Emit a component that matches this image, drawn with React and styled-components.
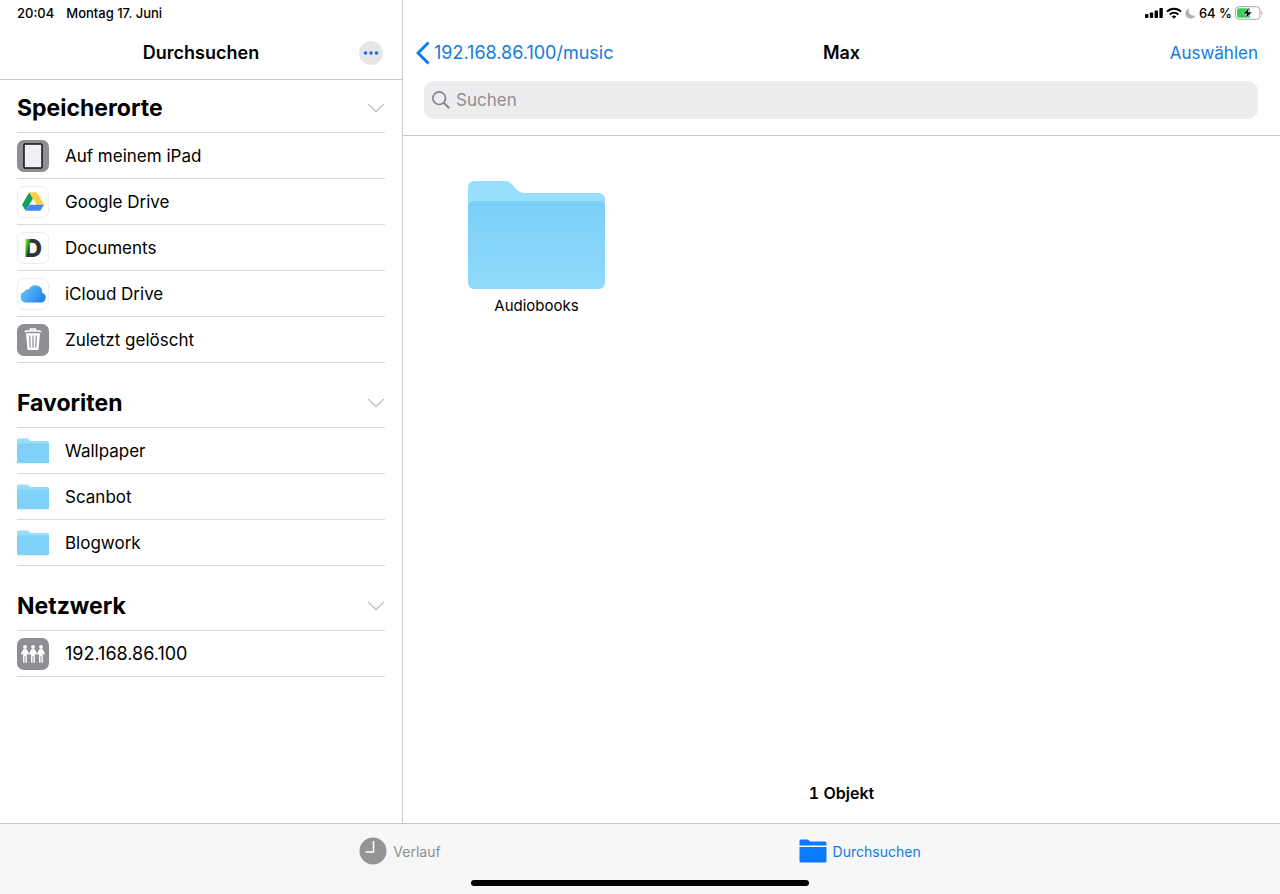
import React, { useState } from 'react';
import styled, { createGlobalStyle, ThemeProvider } from 'styled-components';

const theme = {
  colors: {
    text: '#000000',
    accent: '#0a7aff',
    link: '#147ade',
    muted: '#8e8e93',
    tile: '#8e8e93',
    separator: '#d9d9db',
    border: '#c8c8ca',
    field: '#ededef',
    tabBar: '#f7f7f7',
  },
  fontSizes: {
    status: '13px',
    tab: '14px',
    label: '15px',
    summary: '16px',
    row: '17px',
    body: '18px',
    heading: '23px',
  },
};

const GlobalStyle = createGlobalStyle`
  * {
    box-sizing: border-box;
  }

  body {
    margin: 0;
    background: #ffffff;
    color: #000000;
    font-family: Inter, 'Liberation Sans', sans-serif;
  }

  button, input {
    font: inherit;
    color: inherit;
  }

  button {
    padding: 0;
    border: none;
    background: none;
    cursor: pointer;
  }

  svg {
    display: block;
    flex: none;
  }
`;

const Screen = styled.div`
  display: flex;
  flex-direction: column;
  min-height: 100vh;
`;

const Panes = styled.div`
  display: flex;
  flex: 1;
`;

const Sidebar = styled.aside`
  flex: none;
  width: 403px;
  border-right: 1px solid ${({ theme }) => theme.colors.border};
`;

const Main = styled.main`
  display: flex;
  flex-direction: column;
  flex: 1;
  min-width: 0;
`;

const StatusBar = styled.div`
  display: flex;
  align-items: center;
  justify-content: ${({ $end }) => ($end ? 'flex-end' : 'flex-start')};
  gap: ${({ $end }) => ($end ? '3px' : '12px')};
  height: 26px;
  padding: 0 17px;
  font-size: ${({ theme }) => theme.fontSizes.status};
  font-weight: 500;
  white-space: nowrap;
`;

const NavBar = styled.header`
  display: grid;
  grid-template-columns: 1fr auto 1fr;
  align-items: center;
  height: 54px;
  padding: 0 ${({ $wide }) => ($wide ? '13px' : '19px')};
  border-bottom: ${({ $wide, theme }) => ($wide ? 'none' : `1px solid ${theme.colors.border}`)};
`;

const NavTitle = styled.h1`
  grid-column: 2;
  margin: 0;
  font-size: ${({ theme }) => theme.fontSizes.body};
  font-weight: 600;
  line-height: 24px;
`;

const MoreButton = styled.button`
  display: flex;
  align-items: center;
  justify-content: center;
  justify-self: end;
  width: 24px;
  height: 24px;
  border-radius: 50%;
  background: #e6e6e9;
`;

const BackLink = styled.a`
  display: flex;
  align-items: center;
  gap: 4px;
  color: ${({ theme }) => theme.colors.link};
  font-size: ${({ theme }) => theme.fontSizes.body};
  line-height: 24px;
  text-decoration: none;
`;

const SelectButton = styled.button`
  justify-self: end;
  padding-right: 9px;
  color: ${({ theme }) => theme.colors.link};
  font-size: ${({ theme }) => theme.fontSizes.row};
  line-height: 24px;
`;

const Section = styled.section`
  margin: 0 17px 12px;
`;

const SectionHeader = styled.button`
  display: flex;
  align-items: center;
  justify-content: space-between;
  width: 100%;
  height: 53px;
  padding-top: 4px;
  border-bottom: 1px solid ${({ theme }) => theme.colors.separator};
`;

const SectionTitle = styled.span`
  font-size: ${({ theme }) => theme.fontSizes.heading};
  font-weight: 700;
  line-height: 28px;
`;

const List = styled.ul`
  margin: 0;
  padding: 0;
  list-style: none;
`;

const Row = styled.a`
  display: flex;
  align-items: center;
  gap: 16px;
  height: 46px;
  border-bottom: 1px solid ${({ theme }) => theme.colors.separator};
  color: ${({ theme }) => theme.colors.text};
  font-size: ${({ $address, theme }) => ($address ? theme.fontSizes.body : theme.fontSizes.row)};
  line-height: 24px;
  text-decoration: none;
`;

const Tile = styled.span`
  display: flex;
  align-items: center;
  justify-content: center;
  flex: none;
  width: 32px;
  height: 32px;
  border: ${({ $filled }) => ($filled ? 'none' : '1px solid #ececec')};
  border-radius: 7px;
  background: ${({ $filled, theme }) => ($filled ? theme.colors.tile : '#ffffff')};
`;

const SearchArea = styled.div`
  padding: 1px 22px 16px 21px;
  border-bottom: 1px solid ${({ theme }) => theme.colors.border};
`;

const SearchField = styled.label`
  display: flex;
  align-items: center;
  gap: 6px;
  height: 38px;
  padding: 0 8px;
  border-radius: 10px;
  background: ${({ theme }) => theme.colors.field};
`;

const SearchInput = styled.input`
  flex: 1;
  min-width: 0;
  padding: 0;
  border: none;
  outline: none;
  background: none;
  font-size: ${({ theme }) => theme.fontSizes.row};
  line-height: 24px;

  &::placeholder {
    color: ${({ theme }) => theme.colors.muted};
    opacity: 1;
  }
`;

const Files = styled.div`
  display: flex;
  flex-wrap: wrap;
  align-items: flex-start;
  flex: 1;
  gap: 40px;
  padding: 45px 65px;
`;

const FileItem = styled.button`
  display: flex;
  flex-direction: column;
  align-items: center;
  gap: 6px;
  font-size: ${({ theme }) => theme.fontSizes.label};
  line-height: 22px;
`;

const Summary = styled.p`
  margin: 0;
  padding-bottom: 19px;
  font-size: ${({ theme }) => theme.fontSizes.summary};
  font-weight: 600;
  font-variant-numeric: tabular-nums;
  line-height: 22px;
  text-align: center;
`;

const BottomBar = styled.footer`
  display: flex;
  flex-direction: column;
  align-items: center;
  justify-content: space-between;
  height: 71px;
  padding-bottom: 8px;
  border-top: 1px solid ${({ theme }) => theme.colors.border};
  background: ${({ theme }) => theme.colors.tabBar};
`;

const Tabs = styled.nav`
  display: flex;
  justify-content: center;
  gap: 358px;
  padding-top: 13px;
`;

const Tab = styled.button`
  display: flex;
  align-items: center;
  gap: 6px;
  height: 28px;
  color: ${({ $active, theme }) => ($active ? theme.colors.link : theme.colors.muted)};
  font-size: ${({ theme }) => theme.fontSizes.tab};
`;

const HomeIndicator = styled.div`
  width: 338px;
  height: 6px;
  border-radius: 3px;
  background: #000000;
`;

const SignalIcon = () => (
  <svg width="18" height="12" viewBox="0 0 18 12" aria-hidden="true">
    <rect x="0" y="7" width="3.400" height="4" rx="0.800" />
    <rect x="4.800" y="5.500" width="3.400" height="5.500" rx="0.800" />
    <rect x="9.600" y="3.500" width="3.400" height="7.500" rx="0.800" />
    <rect x="14.400" y="1" width="3.400" height="10" rx="0.800" />
  </svg>
);

const WifiIcon = () => (
  <svg width="16" height="12" viewBox="0 0 16 12" fill="none" stroke="#000" strokeWidth="2" aria-hidden="true">
    <path d="M1 4.6C5 .7 11 .7 15 4.6" />
    <path d="M3.7 7.5c2.5-2.3 6.100-2.300 8.600 0" />
    <path d="M5.700 9.500c1.400-1.200 3.200-1.200 4.600 0L8 11.800z" fill="#000" stroke="none" />
  </svg>
);

const MoonIcon = () => (
  <svg width="11" height="11" viewBox="0 0 11 11" aria-hidden="true">
    <path d="M4 .5C2.600 4.900 5.900 8.700 10.500 7.400A5.200 5.200 0 1 1 4 .5z" fill="#b0b0b2" />
  </svg>
);

const BatteryIcon = () => (
  <svg width="28" height="14" viewBox="0 0 28 14" aria-hidden="true">
    <rect x="0.500" y="0.700" width="24.500" height="12.600" rx="3.500" fill="#fff" stroke="#a5a5a7" />
    <path d="M4 2.200h11v9.600H4a2 2 0 0 1-2-2V4.200a2 2 0 0 1 2-2z" fill="#35ce5c" />
    <path d="M26.500 5c1 .5 1.200 3.500 0 4z" fill="#8e8e90" />
    <path d="M14.500 1L7.800 7.900h4L9.800 13l7.600-7h-4.300z" fill="#000" stroke="#fff" strokeWidth="0.600" />
  </svg>
);

const DotsIcon = () => (
  <svg width="16" height="4" viewBox="0 0 16 4" fill="#1b74d2" aria-hidden="true">
    <circle cx="2.500" cy="2" r="1.800" />
    <circle cx="8" cy="2" r="1.800" />
    <circle cx="13.500" cy="2" r="1.800" />
  </svg>
);

const Chevron = styled.svg.attrs({ width: 18, height: 10, viewBox: '0 0 18 10', 'aria-hidden': true })`
  fill: none;
  stroke: #c4c4c6;
  stroke-width: 1.5;
  transform: ${({ $closed }) => ($closed ? 'rotate(-90deg)' : 'none')};
`;

const BackIcon = () => (
  <svg width="14" height="24" viewBox="0 0 14 24" fill="none" stroke="#0a7aff" strokeWidth="3" aria-hidden="true">
    <path d="M12.500 1.500L2 12l10.500 10.500" />
  </svg>
);

const SearchIcon = () => (
  <svg width="18" height="18" viewBox="0 0 18 18" fill="none" stroke="#85858a" strokeWidth="1.700" aria-hidden="true">
    <circle cx="7.200" cy="7.200" r="6.300" />
    <path d="M11.800 11.800l5.400 5.400" strokeWidth="2" />
  </svg>
);

const FolderSmall = () => (
  <svg width="32" height="26" viewBox="0 0 32 26" aria-hidden="true">
    <path d="M0 2a1.500 1.500 0 0 1 1.500-1.500h8.800c1.400 0 2 2.500 3.600 2.500H30.500A1.500 1.500 0 0 1 32 4.500V10H0z" fill="#97dcfa" />
    <path d="M0 6.500a1 1 0 0 1 1-1h30a1 1 0 0 1 1 1V24a1.300 1.300 0 0 1-1.300 1.300H1.300A1.300 1.300 0 0 1 0 24z" fill="#80d1f8" />
  </svg>
);

const FolderLarge = () => (
  <svg width="137" height="108" viewBox="0 0 137 108" aria-hidden="true">
    <defs>
      <linearGradient id="folderFront" x1="0" y1="0" x2="0" y2="1">
        <stop offset="0" stopColor="#7acff7" />
        <stop offset="1" stopColor="#91dafc" />
      </linearGradient>
    </defs>
    <path d="M0 6a6 6 0 0 1 6-6h31c9 0 9 12 20 12h74a6 6 0 0 1 6 6v20H0z" fill="#98defd" />
    <path d="M0 26a6 6 0 0 1 6-6h125a6 6 0 0 1 6 6v76a6 6 0 0 1-6 6H6a6 6 0 0 1-6-6z" fill="url(#folderFront)" />
  </svg>
);

const IpadIcon = () => (
  <Tile $filled>
    <svg width="20" height="26" viewBox="0 0 20 26">
      <rect x="1" y="1" width="18" height="24" rx="1" fill="#f0eff6" stroke="#111" strokeWidth="1.500" />
    </svg>
  </Tile>
);

const DriveIcon = () => (
  <Tile>
    <svg width="22" height="19" viewBox="0 0 24 20">
      <path d="M8 0L0 13.500 4 20l8-13.300z" fill="#17a05e" />
      <path d="M8 0h8l8 13.500h-8z" fill="#ffcf43" />
      <path d="M8 13.500h16L20 20H4z" fill="#4586f3" />
    </svg>
  </Tile>
);

const DocumentsMark = styled.svg.attrs({ width: 30, height: 30, viewBox: '0 0 30 30' })`
  overflow: visible;
`;

const DocumentsIcon = () => (
  <Tile>
    <DocumentsMark>
      <defs>
        <linearGradient id="documentsMark" x1="0" y1="0.100" x2="1" y2="0.500">
          <stop offset="0.080" stopColor="#d9e021" />
          <stop offset="0.220" stopColor="#64c832" />
          <stop offset="0.340" stopColor="#158a28" />
          <stop offset="0.400" stopColor="#303236" />
        </linearGradient>
      </defs>
      <text x="15" y="24" textAnchor="middle" fontSize="25" fontWeight="800" fill="url(#documentsMark)">D</text>
    </DocumentsMark>
  </Tile>
);

const CloudIcon = () => (
  <Tile>
    <svg width="26" height="18" viewBox="0 0 26 18">
      <defs>
        <linearGradient id="cloudFill" x1="0" y1="0.200" x2="1" y2="0.700">
          <stop offset="0" stopColor="#6cc4fb" />
          <stop offset="1" stopColor="#2383f0" />
        </linearGradient>
      </defs>
      <path
        d="M6 17.500a5.500 5.500 0 0 1-1.700-10.700A4 4 0 0 1 9 4.300a7 7 0 0 1 13.300 3.500A5 5 0 0 1 21 17.500z"
        fill="url(#cloudFill)"
      />
    </svg>
  </Tile>
);

const TrashIcon = () => (
  <Tile $filled>
    <svg width="18" height="23" viewBox="0 0 18 23" fill="none" stroke="#fff">
      <path d="M1 4.200c0-1 1-1.200 2-1.200h12c1 0 2 .2 2 1.200M6.500 2.500V1h5v1.500" strokeWidth="1.500" />
      <path d="M2 5.200h14L14.500 22h-11z" fill="#fff" stroke="none" />
      <path d="M5.700 7.500l.5 12M9 7.500v12M12.300 7.500l-.5 12" stroke="#8e8e93" strokeWidth="1.200" />
    </svg>
  </Tile>
);

const Person = ({ x }) => (
  <g transform={`translate(${x} 0)`}>
    <circle cx="4" cy="2" r="1.900" />
    <path d="M2.300 4.300h3.400L8 8.500l-.9 1.800L5.900 8v9.800H4.500V11h-1v6.800H2.100V8L.9 10.300 0 8.500z" />
  </g>
);

const NetworkIcon = () => (
  <Tile $filled>
    <svg width="24" height="18" viewBox="0 0 24 18" fill="#fff">
      <Person x={0} />
      <Person x={8} />
      <Person x={16} />
    </svg>
  </Tile>
);

const ClockIcon = () => (
  <svg width="28" height="28" viewBox="0 0 28 28" aria-hidden="true">
    <circle cx="14" cy="14" r="13.500" fill="#949496" />
    <path d="M14.500 4v11H6.500" fill="none" stroke="#fff" strokeWidth="1.500" />
  </svg>
);

const TabFolderIcon = () => (
  <svg width="28" height="24" viewBox="0 0 28 24" fill="#0a7aff" aria-hidden="true">
    <path d="M.5 6.500V2A1.500 1.500 0 0 1 2 .5h6.500c1.500 0 1.800 2 3.300 2H26A1.500 1.500 0 0 1 27.500 4v2.500z" />
    <path d="M.5 8h27v14a1.500 1.500 0 0 1-1.500 1.500H2A1.500 1.500 0 0 1 .5 22z" />
  </svg>
);

const sections = [
  {
    title: 'Speicherorte',
    items: [
      { name: 'Auf meinem iPad', Icon: IpadIcon },
      { name: 'Google Drive', Icon: DriveIcon },
      { name: 'Documents', Icon: DocumentsIcon },
      { name: 'iCloud Drive', Icon: CloudIcon },
      { name: 'Zuletzt gelöscht', Icon: TrashIcon },
    ],
  },
  {
    title: 'Favoriten',
    items: [
      { name: 'Wallpaper', Icon: FolderSmall },
      { name: 'Scanbot', Icon: FolderSmall },
      { name: 'Blogwork', Icon: FolderSmall },
    ],
  },
  {
    title: 'Netzwerk',
    items: [{ name: '192.168.86.100', Icon: NetworkIcon, isAddress: true }],
  },
];

const SidebarSection = ({ title, items }) => {
  const [isOpen, setIsOpen] = useState(true);

  return (
    <Section>
      <SectionHeader aria-expanded={isOpen} onClick={() => setIsOpen(!isOpen)}>
        <SectionTitle>{title}</SectionTitle>
        <Chevron $closed={!isOpen}>
          <path d="M1 1l8 7.500L17 1" />
        </Chevron>
      </SectionHeader>
      {isOpen && (
        <List>
          {items.map(({ name, Icon, isAddress }) => (
            <li key={name}>
              <Row href="#" $address={isAddress}>
                <Icon />
                {name}
              </Row>
            </li>
          ))}
        </List>
      )}
    </Section>
  );
};

export default function App() {
  const [query, setQuery] = useState('');
  const [activeTab, setActiveTab] = useState('browse');

  return (
    <ThemeProvider theme={theme}>
      <GlobalStyle />
      <Screen>
        <Panes>
          <Sidebar>
            <StatusBar>
              <span>20:04</span>
              <span>Montag 17. Juni</span>
            </StatusBar>
            <NavBar>
              <NavTitle>Durchsuchen</NavTitle>
              <MoreButton aria-label="Mehr">
                <DotsIcon />
              </MoreButton>
            </NavBar>
            {sections.map((section) => (
              <SidebarSection key={section.title} {...section} />
            ))}
          </Sidebar>
          <Main>
            <StatusBar $end>
              <SignalIcon />
              <WifiIcon />
              <MoonIcon />
              <span>64 %</span>
              <BatteryIcon />
            </StatusBar>
            <NavBar $wide>
              <BackLink href="#">
                <BackIcon />
                192.168.86.100/music
              </BackLink>
              <NavTitle as="h2">Max</NavTitle>
              <SelectButton>Auswählen</SelectButton>
            </NavBar>
            <SearchArea>
              <SearchField>
                <SearchIcon />
                <SearchInput
                  type="text"
                  aria-label="Suchen"
                  placeholder="Suchen"
                  value={query}
                  onChange={(e) => setQuery(e.target.value)}
                />
              </SearchField>
            </SearchArea>
            <Files>
              <FileItem>
                <FolderLarge />
                Audiobooks
              </FileItem>
            </Files>
            <Summary>1 Objekt</Summary>
          </Main>
        </Panes>
        <BottomBar>
          <Tabs>
            <Tab $active={activeTab === 'recent'} onClick={() => setActiveTab('recent')}>
              <ClockIcon />
              Verlauf
            </Tab>
            <Tab $active={activeTab === 'browse'} onClick={() => setActiveTab('browse')}>
              <TabFolderIcon />
              Durchsuchen
            </Tab>
          </Tabs>
          <HomeIndicator />
        </BottomBar>
      </Screen>
    </ThemeProvider>
  );
}
